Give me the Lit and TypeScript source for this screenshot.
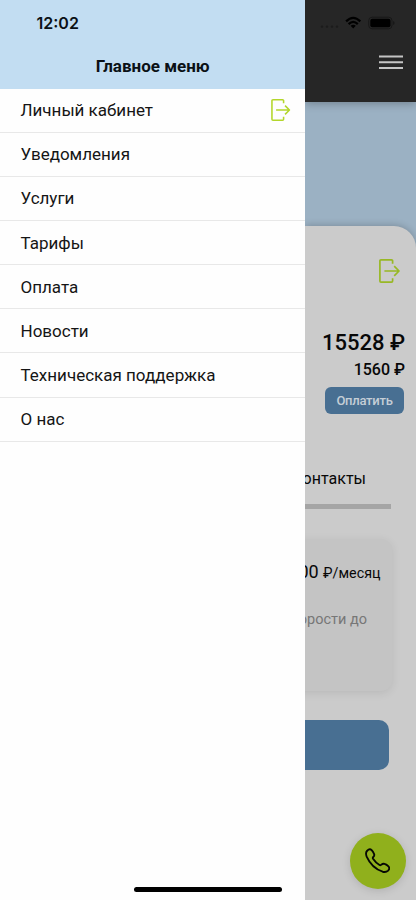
import { LitElement, html, css } from "lit";
import { customElement } from "lit/decorators.js";

@customElement("exit-icon")
class ExitIcon extends LitElement {
  static styles = css`
    :host { display: block; }
    .glyph { display: block; width: 100%; height: 100%; }
  `;
  render() {
    return html`<svg class="glyph" viewBox="0 0 21 24" fill="none" stroke="currentColor" stroke-width="1.7" stroke-linecap="butt" stroke-linejoin="round">
      <path d="M13.6 4.7V1.9Q13.6.9 12.5.9H2Q.9.9.9 2V22Q.9 23.1 2 23.1H12.5Q13.6 23.1 13.6 22V19.3" />
      <path d="M5.4 12H20M15.2 7.2L20 12L15.2 16.8" />
    </svg>`;
  }
}

@customElement("side-menu")
class SideMenu extends LitElement {
  private items = ["Личный кабинет", "Уведомления", "Услуги", "Тарифы", "Оплата", "Новости", "Техническая поддержка", "О нас"];
  static styles = css`
    :host { display: block; background: #fefefe; color: #151515; }
    .head { height: 88.6px; box-sizing: border-box; background: #c2ddf2; }
    .clock { padding: 12px 0 0 36.5px; font: 600 16px/22px Inter, sans-serif; color: #0b1116; }
    .title { margin-top: 21px; text-align: center; font-size: 17px; line-height: 22px; font-weight: 700; color: #0b1116; }
    .row {
      height: 44.15px; box-sizing: border-box; border-bottom: 1px solid #e8e8e8;
      padding: 0 14.5px 0 20.5px; display: flex; align-items: center; justify-content: space-between;
      font-size: 17px;
    }
    .exit { width: 19.5px; height: 22px; color: #b3d62b; }
  `;
  render() {
    return html`
      <div class="head">
        <div class="clock">12:02</div>
        <div class="title">Главное меню</div>
      </div>
      ${this.items.map((t, i) => html`<div class="row"><span>${t}</span>${i === 0 ? html`<exit-icon class="exit"></exit-icon>` : ""}</div>`)}
    `;
  }
}

@customElement("account-page")
class AccountPage extends LitElement {
  static styles = css`
    :host { display: block; background: #9bb1c3; overflow: hidden; color: #080808; white-space: nowrap; }
    .bar {
      height: 101.5px; box-sizing: border-box; background: #262626; box-shadow: 0 2px 8px rgba(0, 0, 0, .25);
      padding: 15px 8px 0 15px;
    }
    .status { display: flex; height: 16px; }
    .dots { width: 21px; height: 16px; }
    .wifi { width: 17px; height: 16px; margin-left: 4px; }
    .battery { width: 28px; height: 16px; margin-left: 6px; }
    .burger { display: block; width: 24px; height: 15px; margin: 24px 5px 0 auto; }
    .sheet {
      margin-top: 124.5px; height: 674px; box-sizing: border-box; padding-top: 33px;
      border-top-right-radius: 22px; background: #cbcbcb; box-shadow: 0 -1px 7px rgba(0, 0, 0, .2);
      display: flex; flex-direction: column; align-items: flex-end;
    }
    .exit { width: 21px; height: 24px; margin-right: 16px; color: #98b825; }
    .sum { margin: 46px 11px 0 0; font-size: 22px; line-height: 28px; font-weight: 500; }
    .due { margin: 3px 11px 0 0; font-size: 16px; line-height: 20px; font-weight: 500; }
    .pay {
      margin: 7px 12px 0 0; width: 79px; height: 27px; border-radius: 6px; background: #486f92; color: #c5ced6;
      display: flex; align-items: center; justify-content: center; font-size: 13px; font-weight: 500; letter-spacing: -.25px;
    }
    .tab { margin: 54px 50px 0 0; font-size: 16px; line-height: 22px; }
    .track { margin: 14px 25px 0 0; width: 200px; height: 4.5px; background: #a5a5a5; }
    .card {
      margin: 30px 24px 0 0; width: 344px; height: 152px; box-sizing: border-box; border-radius: 11px;
      background: #c4c4c4; box-shadow: 0 2px 10px rgba(0, 0, 0, .09); text-align: right;
    }
    .price { margin: 20px 11.5px 0 0; font-size: 18px; line-height: 26px; }
    .unit { font-size: 14.3px; }
    .note { margin: 24px 25px 0 0; font-size: 14.5px; line-height: 20px; color: #777; }
    .action { margin: 29.5px 27px 0 0; width: 361px; height: 50px; border-radius: 10px; background: #486f92; }
    .call {
      margin: 63px 10.5px 0 0; width: 56px; height: 56px; border-radius: 50%; background: #90b01c;
      box-shadow: 0 2px 9px rgba(0, 0, 0, .13); display: flex; align-items: center; justify-content: center;
    }
    .phone { width: 25.5px; height: 25.5px; }
  `;
  render() {
    return html`
      <div class="bar">
        <div class="status">
          <svg class="dots" viewBox="0 0 21 16" fill="#1b1b1b">
            <circle cx="2" cy="11.6" r="1.2" /><circle cx="7" cy="11.6" r="1.2" /><circle cx="12" cy="11.6" r="1.2" /><circle cx="17" cy="11.6" r="1.2" />
          </svg>
          <svg class="wifi" viewBox="0 0 17 16" fill="none" stroke="#000" stroke-width="2.2">
            <path d="M1.1 6.4Q8.2-.6 15.3 6.4M3.6 9.1Q8.2 4.6 12.8 9.1" /><path d="M8.2 13.4L5.6 10.8Q8.2 8.7 10.8 10.8Z" fill="#000" stroke="none" />
          </svg>
          <svg class="battery" viewBox="0 0 28 16">
            <rect x=".7" y="2.2" width="23.3" height="11.6" rx="3.4" fill="none" stroke="#181818" />
            <rect x="2.3" y="3.8" width="20.2" height="8.4" rx="2" fill="#000" />
            <path d="M25.2 6V10Q26.5 9.5 26.5 8T25.2 6Z" fill="#161616" />
          </svg>
        </div>
        <svg class="burger" viewBox="0 0 24 15" stroke="#c4c4c4" stroke-width="2"><path d="M0 1.4H24M0 7.2H24M0 13H24" /></svg>
      </div>
      <div class="sheet">
        <exit-icon class="exit"></exit-icon>
        <div class="sum">15528 ₽</div>
        <div class="due">1560 ₽</div>
        <div class="pay">Оплатить</div>
        <div class="tab">Контакты</div>
        <div class="track"></div>
        <div class="card">
          <div class="price">00 <span class="unit">₽/месяц</span></div>
          <div class="note">скорости до</div>
        </div>
        <div class="action"></div>
        <div class="call">
          <svg class="phone" viewBox="0 0 26 26" fill="none" stroke="#060804" stroke-width="1.9" stroke-linejoin="round">
            <path d="M2.2 2.8Q4.7.2 6.8 2.2Q8.2 3.8 9.2 5.9Q10 7.8 8.4 9.2Q7.6 10 8.2 11Q10.8 15 14.8 17.3Q15.9 17.9 16.8 17Q18.2 15.6 20 16.3Q22.2 17.1 23.9 18.8Q25.8 20.8 23.6 23.1Q21.4 25.2 18 24.2Q6.8 20.3 1.7 8.8Q.2 4.8 2.2 2.8Z" />
          </svg>
        </div>
      </div>`;
  }
}

@customElement("app-root")
class AppRoot extends LitElement {
  static styles = css`
    :host {
      display: grid; grid-template-columns: 305.4px minmax(0, 1fr); position: relative;
      width: 416px; height: 900px; overflow: hidden; background: #cbcbcb; font-family: Roboto, sans-serif;
    }
    .home { position: absolute; left: 134px; bottom: 8.5px; width: 148px; height: 5px; border-radius: 3px; background: #000; }
  `;
  render() {
    return html`<side-menu></side-menu><account-page></account-page><div class="home"></div>`;
  }
}
